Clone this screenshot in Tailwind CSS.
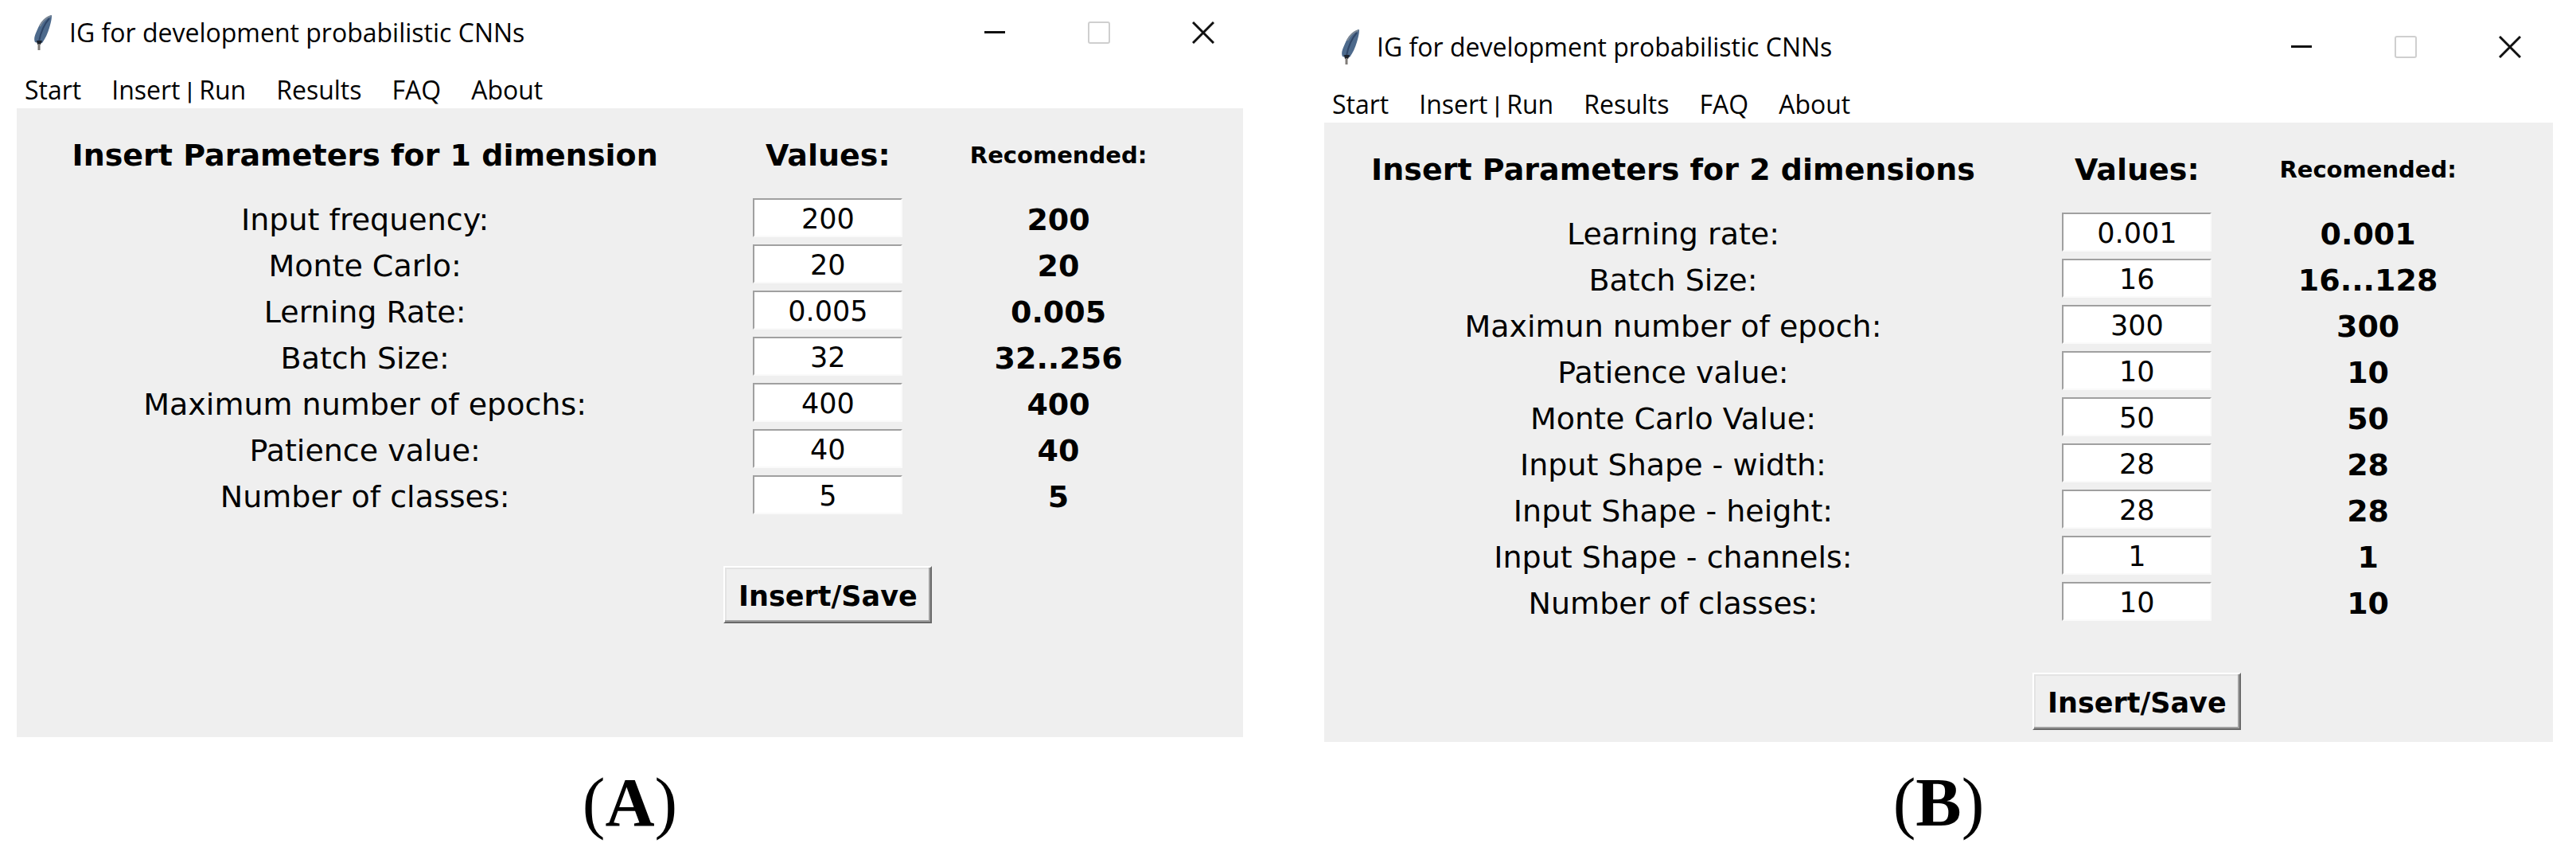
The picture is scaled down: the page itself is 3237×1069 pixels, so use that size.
<!DOCTYPE html>
<html lang="en">
<head>
<meta charset="utf-8">
<title>IG for development probabilistic CNNs</title>
<script src="https://cdn.jsdelivr.net/npm/@tailwindcss/browser@4"></script>
</head>
<body class="bg-white text-black">
<main id="main" class="grid grid-cols-[1541fr_1544fr] gap-x-[102px] pl-[21px] pr-[29px]"></main>
<script>
const row = (id, [label, value, recommended]) => `
  <tr class="h-[58px]">
    <td class="p-0 pt-[6px]"><label for="${id}">${label}</label></td>
    <td class="p-0"><input id="${id}" value="${value}" class="mx-auto block h-[49px] w-[188px] border-2 border-[#a0a0a0] border-r-[#fafafa] border-b-[#fafafa] bg-white pt-1 text-center text-[35px]"></td>
    <td class="p-0 pt-[6px] font-bold">${recommended}</td>
  </tr>`;

const windowButton = (name, attrs, shape) => `
  <button type="button" aria-label="${name}" ${attrs} class="flex h-[54px] w-[100px] items-center justify-center"><svg class="size-[28px]" viewBox="0 0 28 28">${shape}</svg></button>`;

const panel = p => `
  <section class="${p.sectionClass}">
    <header class="flex h-[82px] items-center pl-[21px] font-['Open_Sans',sans-serif] ${p.headerClass}">
      <svg class="h-[44px] w-[24px]" viewBox="0 0 24 44"><path d="M23 0C15 2 9 8 5 18C2 25 0 29 2 34L6 35H11C15 29 18 23 20 16C22 9 23 5 23 0Z" fill="#4d6a8c"/><path d="M20 4C13 12 9 22 7 33" stroke="#2f4668" stroke-width="2" fill="none"/><path d="M22 1C16 3 11 8 8 14" stroke="#7c8896" stroke-width="2" fill="none"/><path d="M4 32H11L9 37H5Z" fill="#1c222b"/><path d="M7 36V44" stroke="#807c78" stroke-width="3"/></svg>
      <h1 class="ml-[21px] grow text-[32px] leading-[40px]">IG for development probabilistic CNNs</h1>
      <div class="flex gap-[31px]">
        ${windowButton('Minimize', '', '<path d="M1 13.500H27" stroke="#111" stroke-width="3"/>')}
        ${windowButton('Maximize', 'disabled', '<rect x="1" y="1" width="26" height="26" rx="2" fill="none" stroke="#cfcfcf" stroke-width="2"/>')}
        ${windowButton('Close', '', '<path d="M1 1L27 27M27 1L1 27" stroke="#111" stroke-width="3"/>')}
      </div>
    </header>
    <nav class="flex h-[54px] gap-[38px] pl-[10px] pt-[9px] font-['Open_Sans',sans-serif] text-[32px] leading-[44px]">
      <a href="#main">Start</a><a href="#main">Insert<span class="font-[Roboto,sans-serif]"> | </span>Run</a><a href="#main">Results</a><a href="#main">FAQ</a><a href="#main">About</a>
    </nav>
    <form class="bg-[#efefef] pt-[9px] font-['DejaVu_Sans',sans-serif] ${p.formClass}">
      <table class="w-full table-fixed text-center text-[38px] leading-[40px]">
        <colgroup><col class="w-[56.8%]"><col class="w-[18.7%]"><col class="w-[18.9%]"><col></colgroup>
        <thead><tr class="h-[99px]"><th class="p-0">${p.title}</th><th class="p-0">Values:</th><th class="p-0 text-[29px]">Recomended:</th><td></td></tr></thead>
        <tbody>${p.rows.map((r, i) => row(p.key + i, r)).join('')}</tbody>
        <tfoot><tr><td></td><td class="p-0 pt-[61px]"><button type="button" class="mx-auto block h-[72px] w-[262px] border-2 border-white border-r-[#696969] border-b-[#696969] pt-1 text-[35px] font-bold shadow-[inset_-2px_-2px_0_#a0a0a0,inset_2px_2px_0_#e3e3e3]">Insert/Save</button></td></tr></tfoot>
      </table>
    </form>
  </section>`;

const caption = letter => `
  <p class="pt-[26px] text-center font-['Liberation_Serif',serif] text-[86px] leading-[100px]">(<b>${letter}</b>)</p>`;

document.getElementById('main').innerHTML =
  panel({
    key: 'a', sectionClass: '', headerClass: '', formClass: 'pb-[143px]',
    title: 'Insert Parameters for 1 dimension',
    rows: [
      ['Input frequency:', '200', '200'],
      ['Monte Carlo:', '20', '20'],
      ['Lerning Rate:', '0.005', '0.005'],
      ['Batch Size:', '32', '32..256'],
      ['Maximum number of epochs:', '400', '400'],
      ['Patience value:', '40', '40'],
      ['Number of classes:', '5', '5'],
    ],
  }) +
  panel({
    key: 'b', sectionClass: 'pt-[18px]', headerClass: 'pr-1', formClass: 'pb-[15px]',
    title: 'Insert Parameters for 2 dimensions',
    rows: [
      ['Learning rate:', '0.001', '0.001'],
      ['Batch Size:', '16', '16...128'],
      ['Maximun number of epoch:', '300', '300'],
      ['Patience value:', '10', '10'],
      ['Monte Carlo Value:', '50', '50'],
      ['Input Shape - width:', '28', '28'],
      ['Input Shape - height:', '28', '28'],
      ['Input Shape - channels:', '1', '1'],
      ['Number of classes:', '10', '10'],
    ],
  }) +
  caption('A') + caption('B');
</script>
</body>
</html>
